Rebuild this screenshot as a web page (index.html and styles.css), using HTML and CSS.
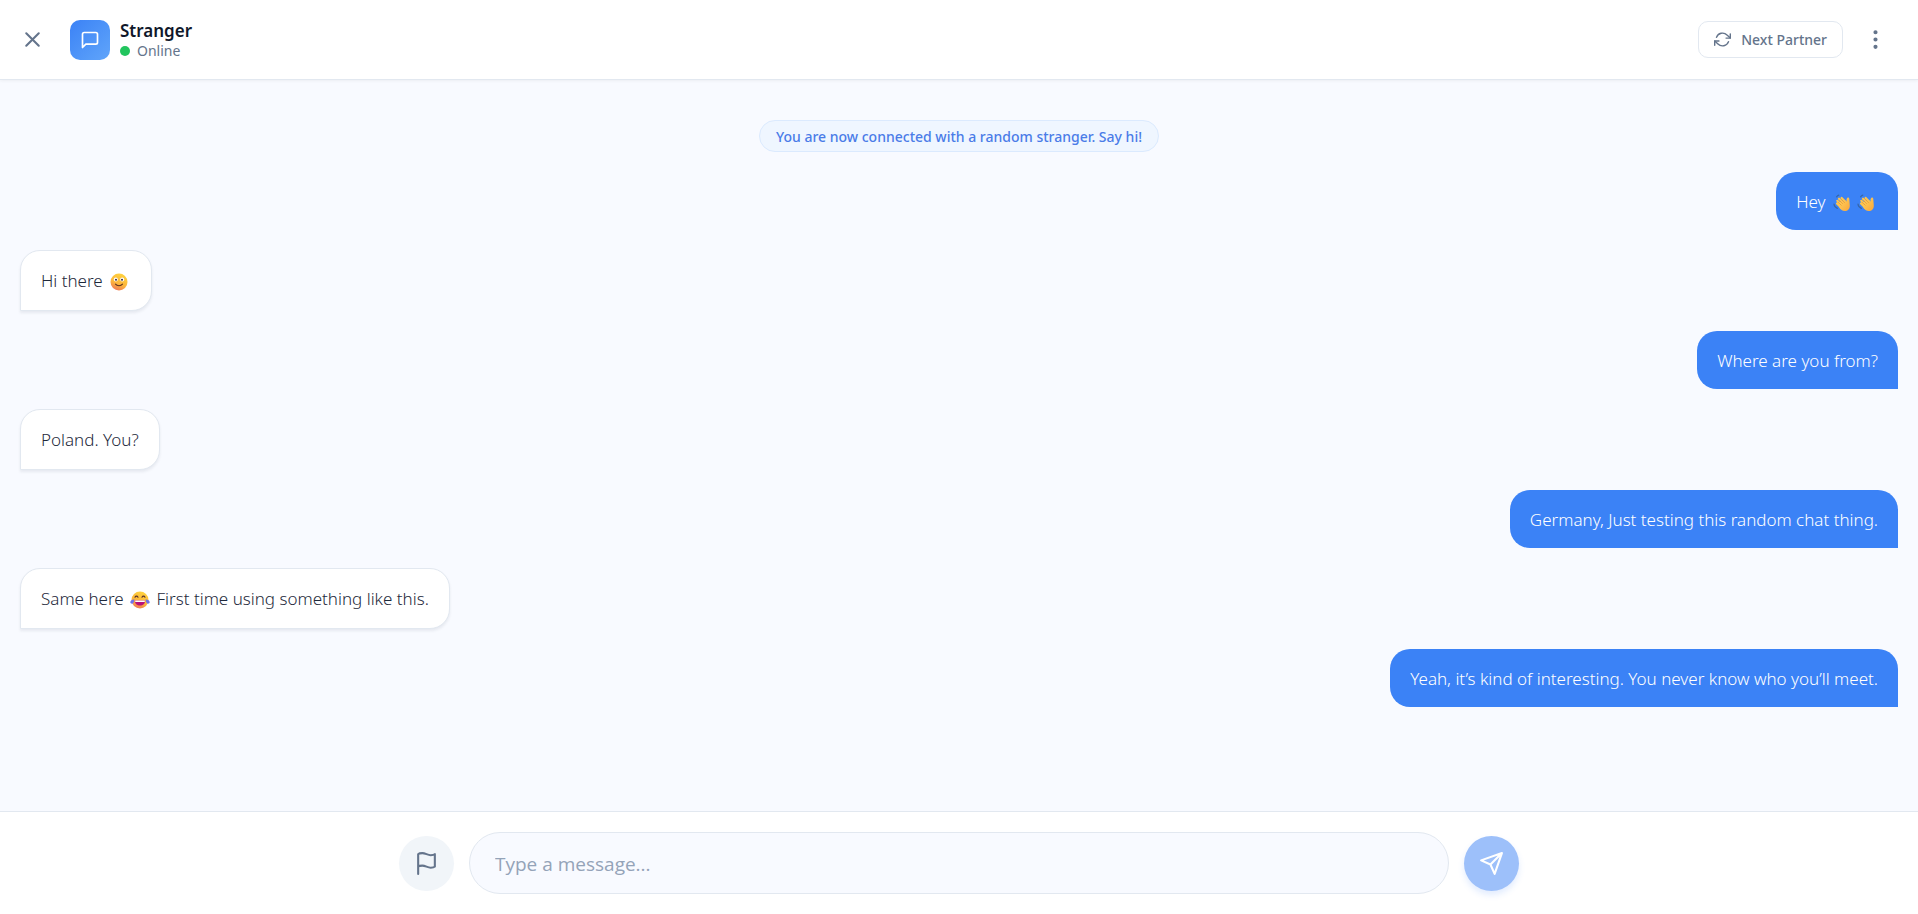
FILE: index.html
```html
<!DOCTYPE html>
<html lang="en">

<head>
    <meta charset="UTF-8">
    <meta name="viewport" content="width=device-width, initial-scale=1.0">
    <title>Chat with Stranger</title>
    <link rel="stylesheet" href="styles.css">
</head>

<body>
    <!-- Shared emoji drawings -->
    <svg class="defs" width="0" height="0" aria-hidden="true">
        <defs>
            <linearGradient id="faceFill" x1="0.7" y1="0" x2="0.3" y2="1">
                <stop offset="0" stop-color="#ffd43f" />
                <stop offset="0.6" stop-color="#fbb43c" />
                <stop offset="1" stop-color="#ef7758" />
            </linearGradient>
            <linearGradient id="handFill" x1="0" y1="0" x2="1" y2="1">
                <stop offset="0" stop-color="#ffd75e" />
                <stop offset="1" stop-color="#f9a53a" />
            </linearGradient>
            <symbol id="wave" viewBox="0 0 18 18">
                <path d="M1 10c.2 2.200 1.400 3.600 3.400 4.400M3.600 2.800c.6-.9 1.300-1.400 2.200-1.600" fill="none" stroke="#3667a8" stroke-width="1.200" stroke-linecap="round" />
                <path d="M4 9.500l4.500 4.500M4.300 6.800l5.200 5.200M6 4.700l5.200 5.200M8.700 3.900l4.300 4.500" fill="none" stroke="#fcc44f" stroke-width="2.200" stroke-linecap="round" />
                <path d="M6 8.500l6.200-2.300 1.300 1.800c.1-1.600-.3-3.200.8-4.100 1-.7 2 0 2 1.200l.5 6.300c.2 3.300-2 5.600-5 5.600-2.300 0-3.600-1.200-5.300-3z" fill="url(#handFill)" />
                <path d="M5.400 8.500l2.800 2.700M6.500 6.600l3 3M8.500 5.600l3 3" fill="none" stroke="#df8531" stroke-width=".6" stroke-linecap="round" />
            </symbol>
            <symbol id="smile" viewBox="0 0 18 18">
                <circle cx="9" cy="9" r="8.500" fill="url(#faceFill)" />
                <circle cx="5.800" cy="6.600" r="2" fill="#fff" />
                <circle cx="12.200" cy="6.600" r="2" fill="#fff" />
                <circle cx="6" cy="6.700" r="1" fill="#3d2937" />
                <circle cx="12" cy="6.700" r="1" fill="#3d2937" />
                <path d="M5.500 11.200c1.700 2.100 5.300 2.100 7 0" fill="none" stroke="#603421" stroke-width="1.100" stroke-linecap="round" />
            </symbol>
            <symbol id="joy" viewBox="0 0 20 18">
                <circle cx="10" cy="9" r="8.500" fill="url(#faceFill)" />
                <path d="M5 6.200c.7-1.500 2.300-1.500 3 0M12 6.200c.7-1.500 2.300-1.500 3 0" fill="none" stroke="#59312d" stroke-width="1.100" stroke-linecap="round" />
                <path d="M4.800 9.500h10.400c0 3-2.200 5-5.200 5s-5.200-2-5.200-5z" fill="#b90f7b" />
                <path d="M5.200 9.500h9.600v1.500H5.200z" fill="#fff" />
                <path d="M4.400 8.200C2 8.600.2 9.700.3 11.300c.1 1.700 2.400 2 3.200.5.500-1 .7-2.300.9-3.600zM15.600 8.200c2.400.4 4.200 1.500 4.100 3.100-.1 1.700-2.400 2-3.200.5-.5-1-.7-2.300-.9-3.600z" fill="#6d72ec" />
            </symbol>
        </defs>
    </svg>

    <div class="chat">
        <header class="chat-header">
            <div class="header-left">
                <button class="icon-btn" aria-label="Close chat">
                    <svg class="icon" width="25" height="25" viewBox="0 0 24 24">
                        <path d="M18 6L6 18M6 6l12 12" />
                    </svg>
                </button>
                <div class="avatar">
                    <svg class="icon" width="20" height="20" viewBox="0 0 24 24">
                        <path d="M21 15a2 2 0 0 1-2 2H7l-4 4V5a2 2 0 0 1 2-2h14a2 2 0 0 1 2 2z" />
                    </svg>
                </div>
                <div class="partner">
                    <h1 class="partner-name">Stranger</h1>
                    <div class="status"><span class="status-dot"></span>Online</div>
                </div>
            </div>
            <div class="header-right">
                <button class="next-btn">
                    <svg class="icon" width="17" height="17" viewBox="0 0 24 24">
                        <path d="M23 4v6h-6M1 20v-6h6" />
                        <path d="M3.510 9a9 9 0 0 1 14.850-3.360L23 10M1 14l4.640 4.360A9 9 0 0 0 20.490 15" />
                    </svg>
                    Next Partner
                </button>
                <button class="icon-btn" aria-label="More options">
                    <svg class="icon dots" width="25" height="25" viewBox="0 0 24 24">
                        <circle cx="12" cy="5" r="1" />
                        <circle cx="12" cy="12" r="1" />
                        <circle cx="12" cy="19" r="1" />
                    </svg>
                </button>
            </div>
        </header>

        <main class="messages">
            <div class="notice">You are now connected with a random stranger. Say hi!</div>
            <div class="message sent">Hey <svg class="emoji wave" role="img" aria-label="waving hand"><use href="#wave" /></svg><svg class="emoji wave" role="img" aria-label="waving hand"><use href="#wave" /></svg></div>
            <div class="message received">Hi there <svg class="emoji smile" role="img" aria-label="smiling face"><use href="#smile" /></svg></div>
            <div class="message sent">Where are you from?</div>
            <div class="message received">Poland. You?</div>
            <div class="message sent">Germany, Just testing this random chat thing.</div>
            <div class="message received">Same here <svg class="emoji joy" role="img" aria-label="tears of joy"><use href="#joy" /></svg> First time using something like this.</div>
            <div class="message sent">Yeah, it’s kind of interesting. You never know who you’ll meet.</div>
        </main>

        <footer class="chat-footer">
            <form class="composer">
                <button type="button" class="round-btn report-btn" aria-label="Report">
                    <svg class="icon" width="25" height="25" viewBox="0 0 24 24">
                        <path d="M4 15s1-1 4-1 5 2 8 2 4-1 4-1V3s-1 1-4 1-5-2-8-2-4 1-4 1zM4 22v-7" />
                    </svg>
                </button>
                <input type="text" class="message-input" placeholder="Type a message..." aria-label="Message">
                <button type="submit" class="round-btn send-btn" aria-label="Send" disabled>
                    <svg class="icon" width="25" height="25" viewBox="0 0 24 24">
                        <path d="M22 2L11 13M22 2l-7 20-4-9-9-4z" />
                    </svg>
                </button>
            </form>
        </footer>
    </div>
</body>

</html>
```
FILE: styles.css
```css
* {
    box-sizing: border-box;
}

body {
    margin: 0;
    font-family: 'Segoe UI', 'Noto Sans', 'Open Sans', sans-serif;
    color: #1e293b;
    background-color: #f8faff;
}

button,
input {
    font-family: inherit;
}

button {
    cursor: pointer;
}

.defs {
    position: absolute;
}

.chat {
    display: flex;
    flex-direction: column;
    height: 100vh;
}

.icon {
    display: block;
    fill: none;
    stroke: currentColor;
    stroke-width: 2;
    stroke-linecap: round;
    stroke-linejoin: round;
}

/* Header */
.chat-header {
    display: flex;
    justify-content: space-between;
    align-items: center;
    height: 80px;
    padding: 0 30px 0 20px;
    background-color: #fff;
    border-bottom: 1px solid #e2e8f0;
    box-shadow: 0 1px 3px rgba(0, 0, 0, 0.05);
}

.header-left,
.header-right {
    display: flex;
    align-items: center;
}

.header-right {
    gap: 20px;
}

.icon-btn {
    padding: 0;
    border: none;
    background: none;
    color: #64748b;
}

.dots {
    fill: currentColor;
}

.avatar {
    display: flex;
    align-items: center;
    justify-content: center;
    width: 40px;
    height: 40px;
    margin: 0 10px 0 25px;
    border-radius: 10px;
    background: linear-gradient(135deg, #3b82f6, #60a5fa);
    color: #fff;
}

.partner {
    padding-top: 2px;
}

.partner-name {
    margin: 0;
    font-size: 17px;
    line-height: 20px;
    font-weight: 600;
    color: #0f172a;
}

.status {
    display: flex;
    align-items: center;
    gap: 7px;
    font-size: 14px;
    line-height: 20px;
    color: #64748b;
}

.status-dot {
    width: 10px;
    height: 10px;
    border-radius: 50%;
    background-color: #22c55e;
}

.next-btn {
    display: flex;
    align-items: center;
    gap: 10px;
    height: 37px;
    padding: 0 15px;
    border: 1px solid #e2e8f0;
    border-radius: 10px;
    background-color: #fff;
    color: #64748b;
    font-size: 14px;
    font-weight: 500;
}

/* Messages */
.messages {
    flex: 1;
    display: flex;
    flex-direction: column;
    align-items: flex-start;
    gap: 20px;
    padding: 40px 20px 20px;
    overflow-y: auto;
}

.notice {
    align-self: center;
    padding: 6px 16px 4px;
    border: 1px solid #dbeafe;
    border-radius: 16px;
    background-color: #eff6ff;
    color: #4a7ce8;
    font-size: 14px;
    line-height: 20px;
    font-weight: 500;
}

.message {
    max-width: 70%;
    padding: 17px 20px 15px;
    border-radius: 20px;
    font-size: 17px;
    line-height: 26px;
    font-weight: 300;
}

.sent {
    align-self: flex-end;
    border-bottom-right-radius: 0;
    background-color: #3b82f6;
    color: #fff;
}

.received {
    padding-bottom: 16px;
    border: 1px solid #e2e8f0;
    border-bottom-left-radius: 0;
    background-color: #fff;
    box-shadow: 0 2px 3px rgba(30, 41, 59, 0.08);
}

.emoji {
    width: 18px;
    height: 18px;
    margin: 0 3px;
    vertical-align: -4px;
}

.emoji.joy {
    width: 20px;
    margin: 0 2px;
}

/* Footer */
.chat-footer {
    padding: 20px;
    background-color: #fff;
    border-top: 1px solid #e2e8f0;
}

.composer {
    display: flex;
    align-items: center;
    gap: 15px;
    max-width: 1120px;
    margin: 0 auto;
}

.message-input {
    flex: 1;
    min-width: 0;
    height: 62px;
    padding: 2px 25px 0;
    border: 1px solid #e2e8f0;
    border-radius: 31px;
    outline: none;
    background-color: #f8faff;
    color: #1e293b;
    font-family: 'Segoe UI', 'Open Sans', 'Noto Sans', sans-serif;
    font-size: 19px;
}

.message-input::placeholder {
    color: #94a3b8;
}

.round-btn {
    display: flex;
    align-items: center;
    justify-content: center;
    width: 55px;
    height: 55px;
    padding: 0;
    border: none;
    border-radius: 50%;
}

.report-btn {
    background-color: #f1f5f9;
    color: #64748b;
}

.send-btn {
    background-color: #9dc0fa;
    color: #fff;
    box-shadow: 0 4px 6px rgba(59, 130, 246, 0.15);
}
```
